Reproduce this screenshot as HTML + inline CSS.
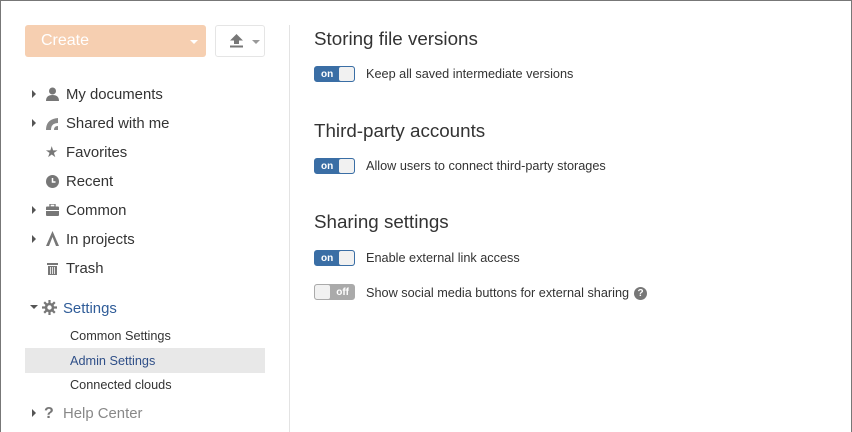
<!DOCTYPE html><html><head><style>
*{margin:0;padding:0;box-sizing:border-box}
body{width:852px;height:432px;overflow:hidden;background:#fff;font-family:"Liberation Sans",sans-serif;position:relative}
.frame{position:absolute;left:0;top:0;width:852px;height:432px;border:1px solid #777;border-bottom:none}
.a{position:absolute;white-space:nowrap}
.nav{font-size:14.9px;color:#333;margin-top:3px}
.arr{position:absolute;width:0;height:0;border-top:4px solid transparent;border-bottom:4px solid transparent;border-left:4px solid #555}
.ic{position:absolute;color:#777}
.h{font-size:18.8px;color:#333;margin-top:1px}
.lbl{font-size:12.7px;color:#333}
.sub{font-size:12.7px;margin-top:1px}
.tg{position:absolute;width:41px;height:16px;border-radius:3px;overflow:hidden;border:1px solid #ccc}
.on{background:#3a6ea5;border-color:#3a6ea5}
.on span{position:absolute;left:6px;top:2px;font-size:10px;color:#fff;font-weight:bold}
.on i{position:absolute;right:0;top:0;width:15px;height:14px;background:#f1f1f1;border-radius:2px}
.off{background:#aaa;border-color:#aaa}
.off span{position:absolute;right:5px;top:2px;font-size:10px;color:#fff;font-weight:bold}
.off i{position:absolute;left:0;top:0;width:15px;height:14px;background:#f1f1f1;border-radius:2px}
</style></head><body>
<div class="frame"></div>
<div class="a" style="left:25px;top:25px;width:181px;height:32px;background:#f6cfb1;border-radius:3px"></div>
<div class="a" style="left:41px;top:32px;font-size:16px;color:#fff">Create</div>
<div class="a" style="left:190px;top:40px;border-left:4px solid transparent;border-right:4px solid transparent;border-top:4px solid #fff"></div>
<div class="a" style="left:215px;top:25px;width:50px;height:32px;border:1px solid #e5e5e5;border-radius:3px"></div>
<svg class="a" style="left:229px;top:33px" width="16" height="15"><path d="M7.5 1 L1 7.5 H5 V11 H10 V7.5 H14 Z" fill="#777"/><rect x="1" y="12.5" width="13" height="2" fill="#777"/></svg>
<div class="a" style="left:252px;top:40px;border-left:4px solid transparent;border-right:4px solid transparent;border-top:4px solid #999"></div>
<div class="a" style="left:289px;top:25px;width:1px;height:407px;background:#e3e3e3"></div>

<div class="arr" style="left:32px;top:90px"></div><svg class="ic" style="left:46px;top:87px" width="13" height="14"><circle cx="6.5" cy="4" r="3.5" fill="#777"/><path d="M0 14 Q0 8 6.5 8 Q13 8 13 14Z" fill="#777"/></svg><div class="a nav" style="left:66px;top:84px">My documents</div>
<div class="arr" style="left:32px;top:119px"></div><svg class="ic" style="left:46px;top:117px" width="13" height="13"><path d="M0 13 Q0 2 12 1 V6 Q5 6 5 13Z" fill="#888"/><path d="M8 13 Q8 9 12 9 V13Z" fill="#888"/></svg><div class="a nav" style="left:66px;top:113px">Shared with me</div>
<div class="a" style="left:45px;top:143px;font-size:15px;color:#777">★</div><div class="a nav" style="left:66px;top:142px">Favorites</div>
<svg class="ic" style="left:46px;top:175px" width="13" height="13"><circle cx="6.5" cy="6.5" r="6.5" fill="#777"/><path d="M6.5 3V7H9.5" stroke="#fff" stroke-width="1.5" fill="none"/></svg><div class="a nav" style="left:66px;top:171px">Recent</div>
<div class="arr" style="left:32px;top:206px"></div><svg class="ic" style="left:46px;top:204px" width="13" height="12"><rect x="4" y="0" width="5" height="3" fill="none" stroke="#777" stroke-width="1.3"/><rect x="0" y="2.5" width="13" height="9.5" rx="1" fill="#777"/><rect x="0" y="6" width="13" height="1" fill="#fff"/></svg><div class="a nav" style="left:66px;top:200px">Common</div>
<div class="arr" style="left:32px;top:235px"></div><svg class="ic" style="left:46px;top:231px" width="13" height="15"><path d="M6.5 0 L0 15 H3 L6.5 6 L10 15 H13Z" fill="#777"/></svg><div class="a nav" style="left:66px;top:229px">In projects</div>
<svg class="ic" style="left:47px;top:262px" width="11" height="13"><rect x="0" y="1" width="11" height="2" fill="#777"/><rect x="1" y="4" width="9" height="9" fill="#777"/><path d="M3.5 5v7M5.5 5v7M7.5 5v7" stroke="#fff" stroke-width=".8"/></svg><div class="a nav" style="left:66px;top:258px">Trash</div>

<div class="a" style="left:30px;top:305px;border-left:4px solid transparent;border-right:4px solid transparent;border-top:4px solid #555"></div>
<svg class="ic" style="left:42px;top:300px" width="15" height="15" viewBox="0 0 15 15"><g stroke="#777" stroke-width="2.2"><path d="M7.5 0v15M0 7.5h15M2.2 2.2l10.6 10.6M12.8 2.2L2.2 12.8"/></g><circle cx="7.5" cy="7.5" r="4.8" fill="#777"/><circle cx="7.5" cy="7.5" r="2.2" fill="#fff"/></svg>
<div class="a nav" style="left:63px;top:298px;color:#2f5c98">Settings</div>
<div class="a sub" style="left:70px;top:328px;color:#333">Common Settings</div>
<div class="a" style="left:25px;top:348px;width:240px;height:25px;background:#e8e8e8"></div>
<div class="a sub" style="left:70px;top:353px;color:#2f4f88">Admin Settings</div>
<div class="a sub" style="left:70px;top:377px;color:#333">Connected clouds</div>
<div class="arr" style="left:32px;top:409px"></div>
<div class="a" style="left:44px;top:405px;font-size:16px;font-weight:bold;color:#777">?</div>
<div class="a nav" style="left:63px;top:403px;color:#888">Help Center</div>

<div class="a h" style="left:314px;top:27px">Storing file versions</div>
<div class="tg on" style="left:314px;top:66px"><span>on</span><i></i></div>
<div class="a lbl" style="left:366px;top:67px">Keep all saved intermediate versions</div>
<div class="a h" style="left:314px;top:119px">Third-party accounts</div>
<div class="tg on" style="left:314px;top:158px"><span>on</span><i></i></div>
<div class="a lbl" style="left:366px;top:159px">Allow users to connect third-party storages</div>
<div class="a h" style="left:314px;top:210px">Sharing settings</div>
<div class="tg on" style="left:314px;top:250px"><span>on</span><i></i></div>
<div class="a lbl" style="left:366px;top:251px">Enable external link access</div>
<div class="tg off" style="left:314px;top:284px"><span>off</span><i></i></div>
<div class="a lbl" style="left:366px;top:286px">Show social media buttons for external sharing</div>
<div class="a" style="left:634px;top:287px;width:13px;height:13px;border-radius:50%;background:#777;color:#fff;font-size:10px;font-weight:bold;text-align:center;line-height:13px">?</div>
</body></html>
